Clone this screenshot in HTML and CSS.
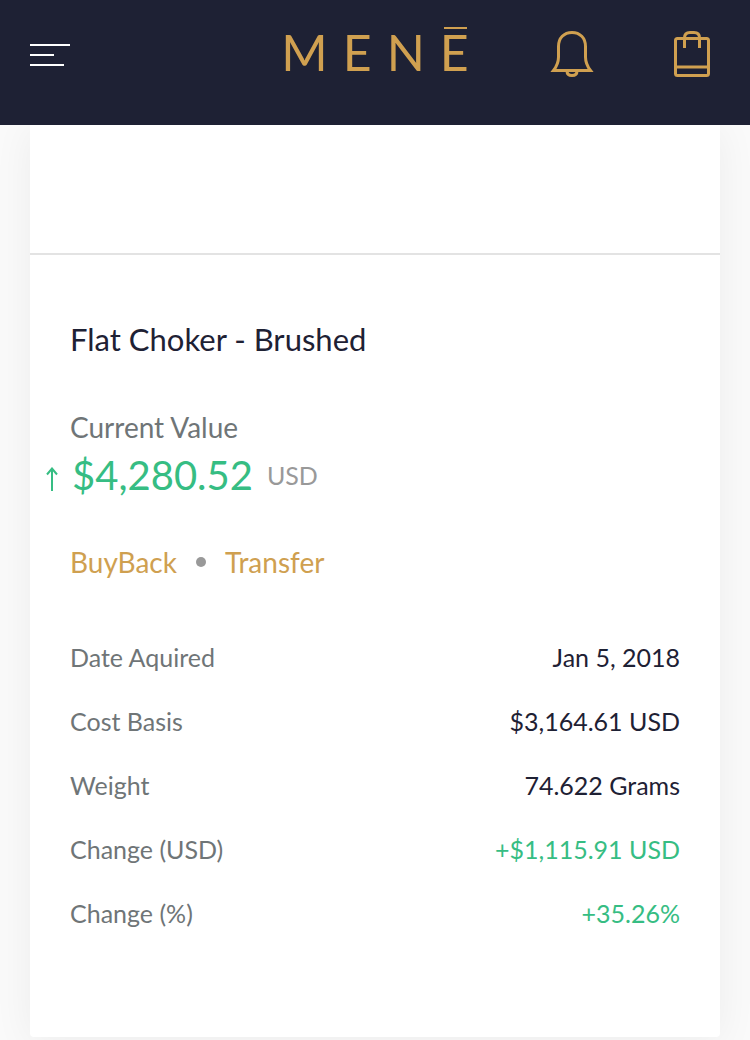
FILE: index.html
```html
<!DOCTYPE html>
<html lang="en">
<head>
<meta charset="utf-8">
<meta name="viewport" content="width=device-width, initial-scale=1">
<title>Menē</title>
<link rel="stylesheet" href="styles.css">
</head>
<body>
<header class="topbar">
  <button class="icon-button menu" type="button" aria-label="Menu">
    <span class="bar bar-long"></span>
    <span class="bar bar-short"></span>
    <span class="bar bar-mid"></span>
  </button>
  <a class="logo" href="#" aria-label="Menē"><span>M</span><span>E</span><span>N</span><span class="macron">E</span></a>
  <div class="actions">
    <button class="icon-button" type="button" aria-label="Notifications">
      <svg width="44" height="48" viewBox="0 0 44 48" fill="none" stroke="currentColor" stroke-width="3">
        <path d="M3.500 40.500C7 36 8.500 32 8.500 27V16.500C8.500 8 14 2.500 22 2.500S35.500 8 35.500 16.500V27C35.500 32 37 36 40.500 40.500Z"/>
        <path d="M17 41C17 44 19 45.500 22 45.500S27 44 27 41"/>
      </svg>
    </button>
    <button class="icon-button" type="button" aria-label="Shopping bag">
      <svg width="36" height="48" viewBox="0 0 36 48" fill="none" stroke="currentColor" stroke-width="3">
        <rect x="1.500" y="8.500" width="33" height="37" rx="2"/>
        <path d="M1.500 37H34.500M10.500 18V8Q10.500 2.500 16 2.500H20Q25.500 2.500 25.500 8V18"/>
      </svg>
    </button>
  </div>
</header>
<main class="page">
  <article class="card">
    <div class="card-media"></div>
    <div class="card-body">
      <h1 class="title">Flat Choker - Brushed</h1>
      <p class="label">Current Value</p>
      <p class="value">
        <svg class="arrow" width="12" height="24" viewBox="0 0 12 24" fill="none" stroke="currentColor" stroke-width="2" role="img" aria-label="Up">
          <path d="M6 24V2M1 7.500L6 1.500L11 7.500"/>
        </svg>
        <span class="amount">$4,280.52</span>
        <span class="currency">USD</span>
      </p>
      <nav class="links">
        <a href="#">BuyBack</a>
        <span class="dot"></span>
        <a href="#">Transfer</a>
      </nav>
      <dl class="details">
        <div class="row"><dt>Date Aquired</dt><dd>Jan 5, 2018</dd></div>
        <div class="row"><dt>Cost Basis</dt><dd>$3,164.61 USD</dd></div>
        <div class="row"><dt>Weight</dt><dd>74.622 Grams</dd></div>
        <div class="row"><dt>Change (USD)</dt><dd class="gain">+$1,115.91 USD</dd></div>
        <div class="row"><dt>Change (%)</dt><dd class="gain">+35.26%</dd></div>
      </dl>
    </div>
  </article>
</main>
</body>
</html>
```
FILE: styles.css
```css
* {
  box-sizing: border-box;
}

body {
  margin: 0;
  background: #fafafa;
  color: #1e2134;
  font-family: Lato, "Liberation Sans", sans-serif;
}

h1,
p,
dl,
dd {
  margin: 0;
  font-weight: 400;
}

a {
  color: inherit;
  text-decoration: none;
}

.topbar {
  position: relative;
  z-index: 1;
  display: grid;
  grid-template-columns: 1fr auto 1fr;
  align-items: start;
  height: 125px;
  padding: 30px 30px 0;
  background: #1e2134;
  color: #d0a050;
}

.icon-button {
  display: block;
  padding: 0;
  border: 0;
  background: none;
  color: inherit;
  cursor: pointer;
}

.icon-button svg {
  display: block;
}

.menu {
  display: grid;
  gap: 8px;
  justify-self: start;
  padding: 14px 0;
}

.bar {
  height: 2px;
  background: #fff;
}

.bar-long {
  width: 40px;
}

.bar-short {
  width: 24px;
}

.bar-mid {
  width: 34px;
}

.logo {
  display: flex;
  gap: 15px;
  font-size: 50px;
  line-height: 44px;
}

.macron {
  position: relative;
}

.macron::before {
  content: "";
  position: absolute;
  top: -3px;
  right: 2px;
  left: 4px;
  height: 2px;
  background: currentColor;
}

.actions {
  display: flex;
  justify-content: flex-end;
  gap: 80px;
  padding-right: 10px;
}

.page {
  padding: 0 30px 3px;
}

.card {
  background: #fff;
  border-radius: 0 0 4px 4px;
  box-shadow: 0 4px 40px rgba(0, 0, 0, 0.06);
}

.card-media {
  height: 130px;
  border-bottom: 2px solid #e3e3e3;
}

.card-body {
  padding: 64px 40px 108px;
}

.title {
  font-size: 31px;
  line-height: 40px;
}

.label {
  margin-top: 50px;
  color: #6f7577;
  font-size: 28px;
  line-height: 36px;
}

.value {
  display: flex;
  align-items: center;
  gap: 14px;
  margin: 4px 0 0 -24px;
  color: #36bd83;
  line-height: 52px;
}

.arrow {
  flex: none;
  margin-top: 8px;
}

.amount {
  font-size: 40px;
}

.currency {
  color: #999;
  font-size: 25px;
}

.links {
  display: flex;
  align-items: center;
  gap: 19px;
  margin-top: 41px;
  color: #cfa050;
  font-size: 28px;
  line-height: 40px;
}

.dot {
  width: 10px;
  height: 10px;
  border-radius: 50%;
  background: #999;
}

.details {
  display: grid;
  gap: 32px;
  margin-top: 59px;
  font-size: 25px;
  line-height: 32px;
}

.row {
  display: flex;
  justify-content: space-between;
}

.row dt {
  color: #6f7577;
}

.row .gain {
  color: #36bd83;
}
```
